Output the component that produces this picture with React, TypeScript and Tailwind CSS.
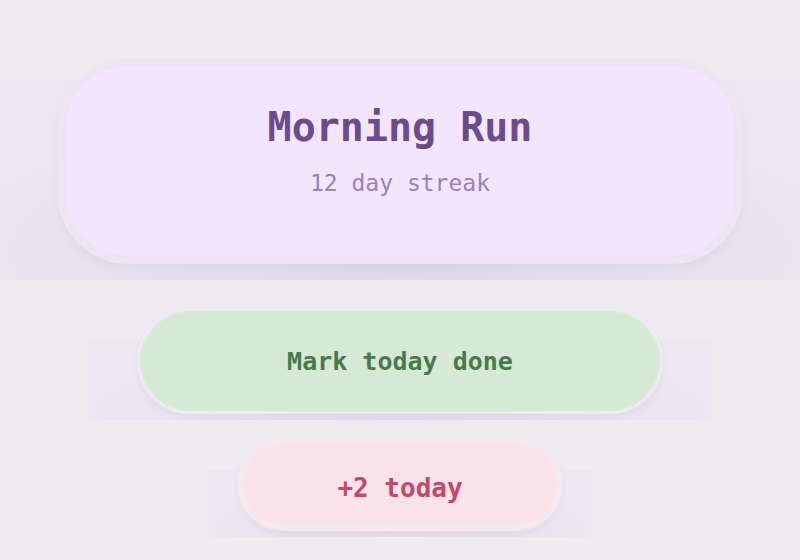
import React from "react";

const mono = "font-['DejaVu_Sans_Mono','Liberation_Mono',monospace]";

export default function App() {
  return (
    <div
      className={`min-h-[560px] w-full bg-[#eeebf1] flex flex-col items-center pt-[80px] ${mono}`}
    >
      {/* habit card */}
      <div className="w-full h-[200px] flex justify-center bg-[radial-gradient(ellipse_70%_90%_at_50%_85%,#ddd5e8,#ebe7f0_80%)]">
        <div className="mt-[-22px] w-[686px] h-[206px] shrink-0 rounded-[72px] border-[6px] border-[#ebe6f0] bg-[#f3e5fc] shadow-[inset_0_0_0_2px_#efe1f8,0_4px_6px_rgba(170,150,200,0.1)] flex flex-col items-center pt-[39px]">
          <h1 className="text-[40px] leading-[48px] font-bold text-[#6a4c8a]">
            Morning Run
          </h1>
          <p className="mt-[18px] text-[23px] leading-[28px] text-[#9a80bd]">
            12 day streak
          </p>
        </div>
      </div>

      {/* mark done */}
      <div className="mt-[60px] w-[624px] h-[80px] flex justify-center bg-[radial-gradient(ellipse_70%_90%_at_50%_85%,#e2dbeb,#ece8f1_80%)]">
        <button className="mt-[-32px] w-[526px] h-[106px] shrink-0 rounded-full border-[3px] border-[#f0eaf4] bg-[#d5e9d5] shadow-[inset_0_0_0_2px_#d9ecd9,0_3px_6px_rgba(170,150,200,0.1)] pt-[2px] text-[25px] font-bold text-[#4a7a4c]">
          Mark today done
        </button>
      </div>

      {/* today count */}
      <div className="mt-[50px] w-[384px] h-[67px] flex justify-center bg-[radial-gradient(ellipse_70%_90%_at_50%_85%,#e3ddec,#ece8f1_80%)]">
        <div className="mt-[-33px] w-[326px] h-[94px] shrink-0 rounded-full border-[5px] border-[#f2e9f1] bg-[#fbe3eb] shadow-[inset_0_0_0_2px_#fbe6ee,0_3px_6px_rgba(170,150,200,0.1)] pt-[8px] flex items-center justify-center text-[26px] font-bold text-[#c44868]">
          +2 today
        </div>
      </div>
    </div>
  );
}
